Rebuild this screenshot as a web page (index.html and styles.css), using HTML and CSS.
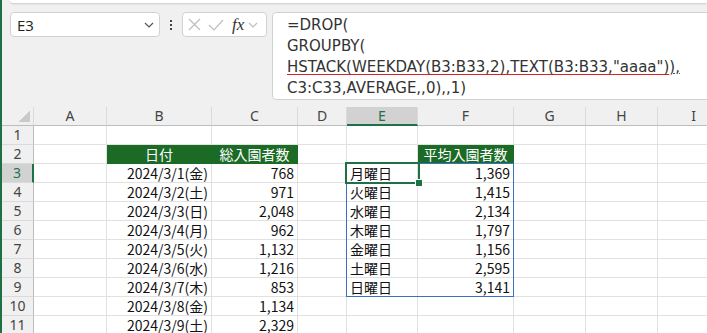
FILE: index.html
```html
<!DOCTYPE html>
<html lang="ja">
<head>
    <meta charset="UTF-8">
    <title>GROUPBY</title>
    <link rel="stylesheet" href="styles.css">
</head>
<body>
    <div class="ribbon"></div>

    <div class="formula-row">
        <div class="name-box">
            <span>E3</span>
            <svg class="chev" width="10" height="6" viewBox="0 0 10 6"><polyline points="1,1 5,5 9,1" fill="none" stroke="#555" stroke-width="1.2"/></svg>
        </div>
        <div class="dots"><i></i><i></i><i></i></div>
        <div class="fn-box">
            <svg width="13" height="13" viewBox="0 0 13 13"><path d="M1 1 L12 12 M12 1 L1 12" stroke="#bdbdbd" stroke-width="1.2"/></svg>
            <svg width="16" height="12" viewBox="0 0 16 12"><polyline points="1,6 6,11 15,1" fill="none" stroke="#bdbdbd" stroke-width="1.2"/></svg>
            <span class="fx">fx</span>
            <svg width="10" height="6" viewBox="0 0 10 6"><polyline points="1,1 5,5 9,1" fill="none" stroke="#bdbdbd" stroke-width="1.2"/></svg>
        </div>
        <div class="formula">
            <div>=DROP(</div>
            <div>GROUPBY(</div>
            <div><span class="ref">HSTACK(WEEKDAY(B3:B33,2),TEXT(B3:B33,"aaaa")</span><span class="tail">),</span></div>
            <div>C3:C33,AVERAGE,,0),,1)</div>
        </div>
    </div>

    <div class="sheet">
        <div class="corner"></div><div class="ch">A</div><div class="ch">B</div><div class="ch">C</div><div class="ch">D</div><div class="ch sel">E</div><div class="ch">F</div><div class="ch">G</div><div class="ch">H</div><div class="ch">I</div>

        <div class="rh">1</div><div class="c"></div><div class="c"></div><div class="c"></div><div class="c"></div><div class="c"></div><div class="c"></div><div class="c"></div><div class="c"></div><div class="c"></div>
        <div class="rh">2</div><div class="c"></div><div class="c g">日付</div><div class="c g">総入園者数</div><div class="c"></div><div class="c"></div><div class="c g">平均入園者数</div><div class="c"></div><div class="c"></div><div class="c"></div>
        <div class="rh sel">3</div><div class="c"></div><div class="c r">2024/3/1(金)</div><div class="c r">768</div><div class="c"></div><div class="c">月曜日</div><div class="c r">1,369</div><div class="c"></div><div class="c"></div><div class="c"></div>
        <div class="rh">4</div><div class="c"></div><div class="c r">2024/3/2(土)</div><div class="c r">971</div><div class="c"></div><div class="c">火曜日</div><div class="c r">1,415</div><div class="c"></div><div class="c"></div><div class="c"></div>
        <div class="rh">5</div><div class="c"></div><div class="c r">2024/3/3(日)</div><div class="c r">2,048</div><div class="c"></div><div class="c">水曜日</div><div class="c r">2,134</div><div class="c"></div><div class="c"></div><div class="c"></div>
        <div class="rh">6</div><div class="c"></div><div class="c r">2024/3/4(月)</div><div class="c r">962</div><div class="c"></div><div class="c">木曜日</div><div class="c r">1,797</div><div class="c"></div><div class="c"></div><div class="c"></div>
        <div class="rh">7</div><div class="c"></div><div class="c r">2024/3/5(火)</div><div class="c r">1,132</div><div class="c"></div><div class="c">金曜日</div><div class="c r">1,156</div><div class="c"></div><div class="c"></div><div class="c"></div>
        <div class="rh">8</div><div class="c"></div><div class="c r">2024/3/6(水)</div><div class="c r">1,216</div><div class="c"></div><div class="c">土曜日</div><div class="c r">2,595</div><div class="c"></div><div class="c"></div><div class="c"></div>
        <div class="rh">9</div><div class="c"></div><div class="c r">2024/3/7(木)</div><div class="c r">853</div><div class="c"></div><div class="c">日曜日</div><div class="c r">3,141</div><div class="c"></div><div class="c"></div><div class="c"></div>
        <div class="rh">10</div><div class="c"></div><div class="c r">2024/3/8(金)</div><div class="c r">1,134</div><div class="c"></div><div class="c"></div><div class="c"></div><div class="c"></div><div class="c"></div><div class="c"></div>
        <div class="rh">11</div><div class="c"></div><div class="c r">2024/3/9(土)</div><div class="c r">2,329</div><div class="c"></div><div class="c"></div><div class="c"></div><div class="c"></div><div class="c"></div><div class="c"></div>

        <!-- spill range E3:F9 and active cell E3 -->
        <div class="spill"></div>
        <div class="active"></div>
    </div>
</body>
</html>
```

FILE: styles.css
```css
html, body {
    margin: 0;
    padding: 0;
}

body {
    width: 705px;
    height: 333px;
    overflow: hidden;
    background-color: #f0f0f0;
    border-left: 2px solid #1e7145;
    font-family: "DejaVu Sans", sans-serif;
}

.ribbon {
    height: 3px;
    margin-left: 8px;
    background-color: #fff;
    border-bottom-left-radius: 6px;
    box-shadow: 0 1px 2px rgba(0, 0, 0, 0.15);
}

.formula-row {
    display: flex;
    align-items: flex-start;
    margin-top: 9px;
    padding-left: 8px;
}

.name-box {
    box-sizing: border-box;
    width: 150px;
    height: 25px;
    background-color: #fff;
    border: 1px solid #d2d2d2;
    border-radius: 4px;
    display: flex;
    align-items: center;
    justify-content: space-between;
    padding: 0 5px 0 6px;
    font-family: "Open Sans", sans-serif;
    font-size: 15px;
    color: #222;
}

.dots {
    width: 22px;
    height: 25px;
    display: flex;
    flex-direction: column;
    align-items: center;
    justify-content: center;
    gap: 2px;
}

.dots i {
    width: 2px;
    height: 2px;
    background-color: #444;
}

.fn-box {
    box-sizing: border-box;
    width: 85px;
    height: 25px;
    background-color: #fff;
    border: 1px solid #d2d2d2;
    border-radius: 4px;
    display: flex;
    align-items: center;
    padding-left: 5px;
    gap: 7px;
}

.fx {
    font-family: "Liberation Serif", serif;
    font-style: italic;
    font-size: 17px;
    color: #333;
    margin-left: 1px;
    margin-right: -3px;
}

.formula {
    box-sizing: border-box;
    flex: 1;
    height: 88px;
    margin-left: 5px;
    margin-right: -10px;
    background-color: #fff;
    border: 1px solid #d2d2d2;
    border-radius: 4px 0 0 4px;
    padding: 2px 0 0 14px;
    font-size: 15px;
    line-height: 21px;
    color: #333;
    white-space: nowrap;
}

.ref {
    text-decoration: underline;
    text-decoration-color: #e02020;
    text-underline-offset: 2px;
}

.tail {
    text-decoration: underline;
    text-decoration-color: #555;
    text-underline-offset: 1px;
}

.sheet {
    position: relative;
    margin-top: 7px;
    display: grid;
    grid-template-columns: 32px 73px 105px 86px 49px 71px 96px 72px 72px 72px;
    grid-auto-rows: 19px;
    background-color: #fff;
    font-family: "Noto Sans CJK JP", sans-serif;
    font-size: 14px;
    color: #111;
}

.sheet > div {
    box-sizing: border-box;
    white-space: nowrap;
    overflow: hidden;
}

.corner {
    background: #f0f0f0 linear-gradient(135deg, transparent 50%, #c9c9c9 50%) no-repeat right 3px bottom 3px / 11px 11px;
    border-right: 1px solid #dadada;
    border-bottom: 1px solid #bdbdbd;
}

.ch {
    background-color: #f0f0f0;
    border-right: 1px solid #dadada;
    border-bottom: 1px solid #bdbdbd;
    text-align: center;
    font-family: "Noto Sans", sans-serif;
    font-size: 14px;
    line-height: 18px;
    color: #444;
}

.ch.sel {
    background-color: #d2d2d2;
    border-bottom: 2px solid #1e7145;
    color: #1e7145;
}

.rh {
    background-color: #f0f0f0;
    border-right: 1px solid #bdbdbd;
    border-bottom: 1px solid #dadada;
    text-align: center;
    font-family: "Noto Sans", sans-serif;
    font-size: 14px;
    line-height: 18px;
    color: #444;
}

.rh.sel {
    background-color: #d2d2d2;
    border-right: 2px solid #1e7145;
    color: #1e7145;
}

.c {
    border-right: 1px solid #e1e1e1;
    border-bottom: 1px solid #e1e1e1;
    padding: 0 3px;
    line-height: 19px;
}

.r {
    text-align: right;
}

.g {
    background-color: #1b6b26;
    border-color: #1b6b26;
    color: #fff;
    text-align: center;
}

.spill {
    position: absolute;
    grid-column: 6 / 8;
    grid-row: 4 / 11;
    top: -1px;
    left: -1px;
    right: 0;
    bottom: 0;
    border: 1px solid #3a6fc4;
}

.active {
    position: absolute;
    grid-column: 6 / 7;
    grid-row: 4 / 5;
    top: -2px;
    left: -2px;
    right: -2px;
    bottom: -1px;
    border: 2px solid #1e7145;
    overflow: visible !important;
}

.active::after {
    content: "";
    position: absolute;
    right: -5px;
    bottom: -5px;
    width: 6px;
    height: 6px;
    background-color: #1e7145;
    border: 1px solid #fff;
}
```
